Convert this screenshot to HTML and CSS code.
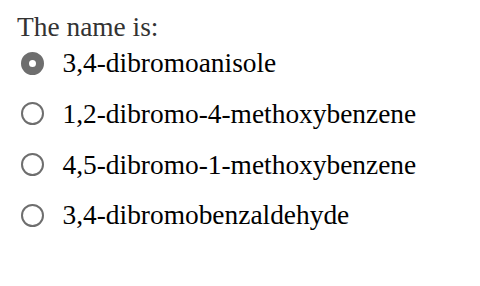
FILE: index.html
```html
<!DOCTYPE html>
<html lang="en">
  <head>
    <meta charset="UTF-8" />
    <title>Question</title>
    <link rel="stylesheet" href="styles.css">
  </head>
  <body>
    <div class="question">
      <h2 class="question-title">2) Name the following ring</h2>
      <p class="prompt">The name is:</p>
      <form class="options">
        <label class="option">
          <input class="radio" type="radio" name="answer" checked />
          <span>3,4-dibromoanisole</span>
        </label>
        <label class="option">
          <input class="radio" type="radio" name="answer" />
          <span>1,2-dibromo-4-methoxybenzene</span>
        </label>
        <label class="option">
          <input class="radio" type="radio" name="answer" />
          <span>4,5-dibromo-1-methoxybenzene</span>
        </label>
        <label class="option">
          <input class="radio" type="radio" name="answer" />
          <span>3,4-dibromobenzaldehyde</span>
        </label>
      </form>
    </div>
  </body>
</html>
```

FILE: styles.css
```css
* {
  box-sizing: border-box;
  margin: 0;
  padding: 0;
}

body {
  background: #fff;
  color: #000;
  font-family: "Liberation Serif", "Times New Roman", serif;
  font-size: 27.4px;
}

.question {
  padding: 0 0 0 17px;
}

.question-title {
  font-size: 27.4px;
  font-weight: bold;
  line-height: 30px;
  margin-top: -30px;
  color: #333;
}

.prompt {
  color: #333;
  line-height: 32px;
  margin-top: 11px;
}

.options {
  display: flex;
  flex-direction: column;
  gap: 16.8px;
  margin-top: 3px;
}

.option {
  display: flex;
  align-items: center;
  gap: 19px;
  line-height: 34px;
}

.radio {
  appearance: none;
  width: 23px;
  height: 23px;
  margin-left: 3.5px;
  border: 2.5px solid #6e6e6e;
  border-radius: 50%;
  background: #fff;
  flex: none;
}

.radio:checked {
  border: 8px solid #6e6e6e;
}
```
